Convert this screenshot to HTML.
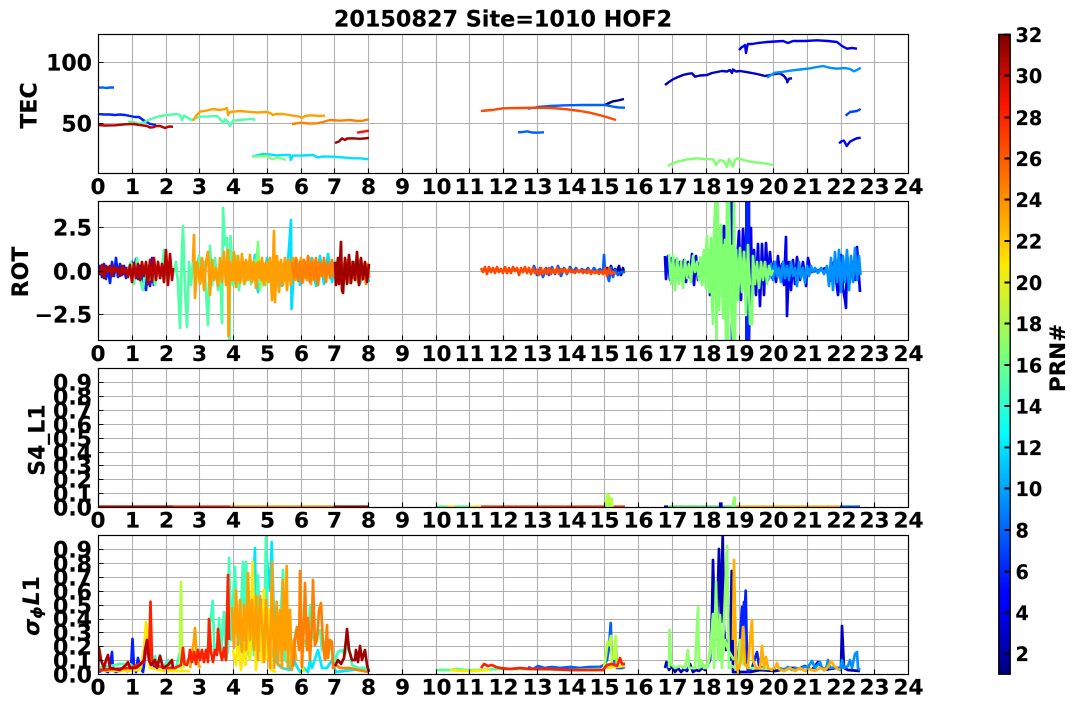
<!DOCTYPE html>
<html><head><meta charset="utf-8"><title>20150827 Site=1010 HOF2</title>
<style>
html,body{margin:0;padding:0;background:#fff}
svg{display:block}
text{font-family:"DejaVu Sans","Liberation Sans",sans-serif;font-weight:bold;font-size:22px;fill:#000;stroke:#000;stroke-width:.15px}
.x{text-anchor:middle;font-size:21.6px}
.y{text-anchor:end}
.c{font-size:19.2px}
.t{fill:none;stroke-width:2.4;stroke-linejoin:round}
.n .t{stroke-width:2.7}
</style></head><body>
<svg width="1077" height="709" viewBox="0 0 1077 709" xmlns="http://www.w3.org/2000/svg">
<defs>
<linearGradient id="jet" x1="0" y1="1" x2="0" y2="0">
<stop offset="0" stop-color="#00007f"/><stop offset=".11" stop-color="#0000ff"/><stop offset=".125" stop-color="#0000ff"/><stop offset=".34" stop-color="#00d4ff"/><stop offset=".375" stop-color="#00ffff"/><stop offset=".5" stop-color="#7dff7a"/><stop offset=".64" stop-color="#ffea00"/><stop offset=".66" stop-color="#ffd500"/><stop offset=".89" stop-color="#ff1300"/><stop offset="1" stop-color="#7f0000"/>
</linearGradient>
<clipPath id="c1"><rect x="98.5" y="34.5" width="810" height="139"/></clipPath>
<clipPath id="c2"><rect x="98.5" y="201.5" width="810" height="139"/></clipPath>
<clipPath id="c3"><rect x="98.5" y="368.5" width="810" height="139"/></clipPath>
<clipPath id="c4"><rect x="98.5" y="535.5" width="810" height="139"/></clipPath>
<path id="gx" fill="none" stroke="#b0b0b0" stroke-width="1.1" d="M132.5 0V139M166.5 0V139M199.5 0V139M233.5 0V139M267.5 0V139M301.5 0V139M334.5 0V139M368.5 0V139M402.5 0V139M436.5 0V139M469.5 0V139M503.5 0V139M537.5 0V139M571.5 0V139M604.5 0V139M638.5 0V139M672.5 0V139M706.5 0V139M739.5 0V139M773.5 0V139M807.5 0V139M841.5 0V139M874.5 0V139"/>
<path id="tx" fill="none" stroke="#000" stroke-width="1.1" d="M132.5 139v-5M166.5 139v-5M199.5 139v-5M233.5 139v-5M267.5 139v-5M301.5 139v-5M334.5 139v-5M368.5 139v-5M402.5 139v-5M436.5 139v-5M469.5 139v-5M503.5 139v-5M537.5 139v-5M571.5 139v-5M604.5 139v-5M638.5 139v-5M672.5 139v-5M706.5 139v-5M739.5 139v-5M773.5 139v-5M807.5 139v-5M841.5 139v-5M874.5 139v-5"/>
<path id="gy" fill="none" stroke="#b0b0b0" stroke-width="1.1" d="M98.5 14H908.5M98.5 28H908.5M98.5 42H908.5M98.5 56H908.5M98.5 70H908.5M98.5 84H908.5M98.5 97H908.5M98.5 111H908.5M98.5 125H908.5"/>
<path id="ty" fill="none" stroke="#000" stroke-width="1.1" d="M98.5 14h5M98.5 28h5M98.5 42h5M98.5 56h5M98.5 70h5M98.5 84h5M98.5 97h5M98.5 111h5M98.5 125h5"/>
</defs>
<rect width="1077" height="709" fill="#fff"/>

<!-- grids -->
<use href="#gx" y="34.5"/><use href="#gx" y="201.5"/><use href="#gx" y="368.5"/><use href="#gx" y="535.5"/>
<path fill="none" stroke="#b0b0b0" stroke-width="1.1" d="M98.5 62.5H908.5M98.5 123.5H908.5M98.5 227.5H908.5M98.5 271.5H908.5M98.5 314.5H908.5"/>
<use href="#gy" y="368.5"/><use href="#gy" y="535.5"/>

<!-- TEC -->
<g clip-path="url(#c1)" class="t">
<path class="t" stroke="#00008f" d="M605 105 609 103 613 101.3 618 100.5 624 99"/>
<path class="t" stroke="#0000c8" d="M665 85 669 82 673 79.3 678 77 683 75 688 73.8 692 73.3 695 76.7 700 75.5 707 75 712 73 717 72 722 71 727 71.5 730 70 732 73 733 69.5 736 71.5 740 71 745 71.8 750 72.7 757 74 765 76 770 75 775 74 780 73.3 784 76 787 80 787.3 82.3 789 78.7 792 78.3"/>
<path class="t" stroke="#0000ee" d="M739 50 742 47 744 46 745 45 746 53 747.5 45 748 44 752 44 758 43 767 42 775 41.5 783 41 788 43 793 41 805 41 817 40.3 828 41 837 42 842 46 847 48.7 852 48 857 48.7"/>
<path class="t" stroke="#0000ee" d="M839 143.3 842 141 844 140.7 846.7 146 850 141.7 854 139.5 857 138.3 860.7 137.7"/>
<path class="t" stroke="#0020ff" d="M98 114 104 114.5 110 114.5 115 115 120 114.5 125 115 130 116 135 117 139 117 143 120 147 122 150 124 156 125"/>
<path class="t" stroke="#0040ff" d="M845.7 115.7 850 112 857 111 860.7 109"/>
<path class="t" stroke="#0060ff" d="M98 87.7 103 87.5 106 88 110 87.5 114 87.5"/>
<path class="t" stroke="#0060ff" d="M528 108.7 538 107 550 106 565 105.3 583 105 595 105 605 105 610 106 613 106.7 619 107.5 625 107.7"/>
<path class="t" stroke="#0060ff" d="M518 132.3 523 132 527 131.3 532 132.5 537 132.7 544 132.3"/>
<path class="t" stroke="#0090ff" d="M767 77.7 771 75 775 72.7 782 72 790 70.7 800 69.5 810 68.3 817 67 823 66 830 67.8 837 68.7 845 68 850 69 854 71.3 857 70 860.7 67.7"/>
<path class="t" stroke="#00e0ff" d="M252 156.7 258 155 263 154 270 154.6 277 155.3 285 155 290 155 290.7 160 293 155.6 303 155.5 313 155 318 157.5 323 156.4 333 156.7 343 157.4 353 158.3 360 158.3 369 159.3"/>
<path class="t" stroke="#50ffa8" d="M128 121.7 134 122 140 124 144 122.5 148 120 154 118 160 116 168 115 177 114 180 115 182 120 184 115.5 188 118 192 120 196 118 200 116.7 208 116.5 217 116 220 119 223 123 225 119.3 228 122 230 126 233 120.7 240 120 247 119.3 253 118.7 255 120.7"/>
<path class="t" stroke="#80ff78" d="M252 156.7 260 156.3 267 156 270 158 273 159.3 277 157.3 281 158.3 286 160"/>
<path class="t" stroke="#80ff70" d="M668 166 672 163.5 677 161.7 687 159.5 697 158.3 705 159 713 159.3 716 165 720 160 724 161.5 727 166.7 729 159 733 166.7 735 160 737 158.3 744 160 750 161.7 757 162.5 765 163.3 773 165"/>
<path class="t" stroke="#ffa000" d="M193 120.7 196 116 200 111.7 207 110.5 213 109 220 110 225 109 227 108 228 115 230 112 233 111.7 240 111 247 111.7 257 112.5 267 112 270 113 273 115 276 114 283 114 292 115.5 300 116.7 302 118 305 116 310 115.3 318 115.8 325 115.7"/>
<path class="t" stroke="#ff8000" d="M292 124 296 123.5 300 122.7 308 123.5 317 123.3 323 122 330 120 340 120.7 350 120 357 121 363 120.7 369 119.3"/>
<path class="t" stroke="#ff4800" d="M481 111 492 110 503 108.3 520 108 537 107.7 552 108 567 109.3 580 111 590 112.7 603 116 616 120"/>
<path class="t" stroke="#ff1000" d="M357 132.7 363 131.7 369 130.7"/>
<path class="t" stroke="#b80000" d="M98 125 105 125.5 115 125.3 125 124.3 133 124 140 125 147 126 150 127.5 153 127.3 156 126 160 126 165 128 169 126.5 173 126.7"/>
<path class="t" stroke="#a00000" d="M335 143 339 141.5 342 138.3 345 140 347 138.5 353 138.3 360 138.8 369 138"/>
</g>

<!-- ROT -->
<g clip-path="url(#c2)" class="n">
<path class="t" stroke="#00009a" d="M605 272 607 268 609 274 611 266 613 273 615 269 617 272 619 266 621 275 623 268 624 273"/>
<path class="t" stroke="#0020ff" d="M98 275 100 266 102 277 104 264 106 279 108 267 110 283 112 262 114 276 116 258 118 277 120 264 122 275 124 266 126 278 128 268 130 274 132 262 134 281 136 259 138 279 140 266 142 283 144 269 146 290 148 266 150 286 152 258 154 286"/>
<path class="t" stroke="#0000ee" d="M665 256 666 279 668 256 670 280 672 258 674 275 676 260 678 278 680 262 682 276 684 260 686 282 688 262 690 278 692 254 694 285 696 256 698 280 700 262 702 277 704 262 706 280 708 266 710 295 712 250 714 282 716 252 718 290 720 250 722 290 724 226 726 290 727 240 728 294 730 258 731.5 201 732 340 733 246 735 290 737 262 739 231 741 300 743 229 745 280 747 201 747.5 340 749 201 749 340 751 228 752 302 754 250 756 295 758 244 760 306 762 244 764 295 766 243 768 280 770 252 772 278 774 262 776 282 778 256 780 278 782 264 784 285 786 237 787 316 789 262 791 290 793 260 795 284 797 257 800 280 803 262 806 286 808 258 811 272 820 270 826 268 830 281 834 262 838 295 841 255 843 288 845 300 846 308 847 252 849 286 852 262 855 280 857 247 860 292"/>
<path fill="none" stroke="#0020ff" stroke-width="5" d="M747.5 201V340"/>
<path class="t" stroke="#0060ff" d="M528 268 531 273 534 266 537 275 540 268 543 277 546 268 549 275 552 267 555 274 558 266 561 276 564 268 567 274 570 267 573 272 576 268 579 272 582 269 585 272 588 268 591 273 594 268 597 272 600 269 603 273 604 255 605 272 607 274 609 281 611 268 613 277 615 270 618 275 621 272 625 272"/>
<path class="t" stroke="#0090ff" d="M767 268 769 276 771 264 773 280 775 262 777 276 779 268 781 282 783 262 785 278 787 266 789 280 791 262 793 276 795 268 797 286 799 262 801 278 803 268 805 283 807 266 809 276 811 266 813 272 815 268 818 273 821 268 824 274 827 266 829 286 831 258 833 290 835 252 837 282 839 250 841 292 843 256 845 282 847 250 849 290 851 256 853 282 855 248 857 280 859 256 860.5 275"/>
<path class="t" stroke="#00e0ff" d="M252 271 255 255 258 292 261 262 264 285 267 258 270 280 273 262 276 285 279 264 282 286 285 262 288 262 291 220 291.5 309 294 270 297 260 300 285 304 262 308 280 312 258 316 286 320 256 324 284 328 254 332 282 336 262 340 280 345 265 350 283 355 262 360 284 365 264 369 282"/>
<path class="t" stroke="#50ffa8" d="M128 270 131 262 134 284 137 258 140 279 143 290 146 262 149 280 152 268 155 285 158 262 161 278 164 250 167 280 170 266 173 275 176 262 178 283 180 328 182 250 183 226 185 290 187 327 189 262 191 285 193 262 196 272 199 256 201 282 204 262 206 290 208 325 210 246 212 285 215 258 218 290 220 262 222 323 223 208 225 245 227 238 228 290 229.5 340 230.5 236 233 285 236 256 239 290 242 258 245 284 248 262 251 284 254 260 256 275"/>
<path class="t" stroke="#80ff78" d="M252 268 255 280 258 242 260 290 263 264 266 285 269 262 272 282 275 266 278 280 281 264 284 280 286 270"/>
<path class="t" stroke="#80ff70" d="M669 254 671 284 673 256 675 290 677 258 679 284 681 262 683 288 685 260 687 278 689 264 691 282 693 256 695 272 697 262 699 280 701 258 703 282 705 272 707 236 709 292 711 238 712 300 713 324 714 234 715.5 201 716.5 340 717.5 201 719 310 721 225 723 318 725 240 726 340 727 201 728 340 729 201 731 305 733 340 734 201 735 340 736 250 738 300 740 248 742 290 744 252 746 315 748 245 750 324 752 324 753 256 755 284 757 262 759 288 761 262 763 280 765 262 767 284 769 266 771 275 773 270"/>
<path class="t" stroke="#80ff70" d="M700 256 702 285 704 250 706 288 708 250 710 292 712 245 714 296 716 250 718 290 720 248 722 296 724 245 726 292 728 250 730 296 732 246 734 292 736 250 738 290 740 250 742 292 744 252 746 288 748 256 750 285"/>
<path class="t" stroke="#ffa000" d="M193 262 194 235 195 298 197 262 200 284 202 258 204 290 206 262 208 252 210 295 212 260 214 280 216 268 218 286 220 258 222 282 224 252 226 285 228 250 228.5 336 230 262 232 280 234 252 236 287 238 256 240 283 242 254 244 284 246 260 248 280 250 255 252 282 254 262 256 288 258 262 260 276 262 258 264 285 266 262 268 282 270 258 272 300 274 231 275 302 277 256 279 292 281 260 283 285 285 258 287 290 289 260 291 285 293 258 295 280 297 262 299 276 301 258 303 282 305 262 307 280 309 258 311 284 313 260 315 278 317 262 319 280 321 264 323 276 325 268"/>
<path class="t" stroke="#ffa000" d="M230 266 231.5 278 233 262 234.5 280 236 264 237.5 280 239 262 240.5 280 242 264 243.5 278 245 262 246.5 280 248 264 249.5 278 251 262 252.5 280 254 264 255.5 280 257 264 258.5 278 260 262 261.5 280 263 264 264.5 278 266 264 267.5 280 269 262 270.5 282 272 264 273.5 280 275 264 276.5 280 278 262 279.5 280 281 264 282.5 278 284 264 285.5 280 287 262 288.5 280 290 266 291.5 278"/>
<path class="t" stroke="#ff8000" d="M292 262 294 278 296 258 298 281 300 262 302 283 304 260 306 278 308 256 310 282 312 262 314 280 316 258 318 285 320 262 322 276 324 258 326 282 328 262 330 278 332 260 334 277 336 266 338 280 340 262 342 282 344 264 346 278 348 260 350 282 352 262 354 278 356 264 358 282 360 260 362 280 364 264 366 284 368 264 369 278"/>
<path class="t" stroke="#ff4800" d="M481 268 483 272 485 267 487 274 489 267 491 272 493 268 495 273 497 267 499 272 501 269 503 273 505 267 507 273 509 268 511 273 513 267 515 271 517 268 519 275 521 268 523 272 525 267 527 273 529 268 531 274 533 268 535 273 537 270 539 275 541 268 543 274 545 269 547 274 549 268 551 274 553 269 555 273 557 268 559 274 561 269 563 272 565 269 567 273 569 269 571 272 573 270 575 273 577 270 579 272 581 270 583 273 585 270 587 273 589 270 591 274 593 271 595 273 597 271 599 274 601 271 603 274 605 268 607 276 609 268 611 274 613 272 616 274"/>
<path class="t" stroke="#b80000" d="M98 268 100 274 102 265 104 278 106 266 108 272 110 266 112 276 114 266 116 272 118 268 120 276 122 266 124 274 126 268 128 277 130 265 132 282 134 263 136 278 138 264 140 280 142 262 144 276 146 262 148 284 150 260 152 282 154 258 156 280 158 262 160 278 162 264 164 282 166 250 168 285 170 254 172 280 173 268"/>
<path class="t" stroke="#a00000" d="M335 262 336 285 338 258 339 284 341 242 342 290 343 293 345 258 347 284 349 255 351 283 353 262 355 280 357 252 359 285 361 258 363 279 365 262 367 282 369 264"/>
</g>

<!-- S4 -->
<g clip-path="url(#c3)" fill="none" stroke-width="2.2">
<path stroke="#50ff90" d="M436 506.5H450M455 506.5H470"/>
<path stroke="#ffe800" d="M447 506.5H455M470 506.5H481"/>
<path stroke="#b80000" d="M98.5 506.5H173"/>
<path stroke="#ff2000" d="M173 506.5H230"/>
<path stroke="#ff9000" d="M230 506.5H335"/>
<path stroke="#a00000" d="M335 506.5H369"/>
<path stroke="#ff3800" d="M481 506.5H625"/>
<path stroke="#00009a" d="M664 506.5H668"/>
<path stroke="#58e878" d="M668 506.5H732"/>
<path stroke="#ffb000" d="M735 506.5H840"/>
<path stroke="#0060ff" d="M840 506.5H860"/>
<path stroke="#b4ff40" fill="#b4ff40" stroke-width="1.5" d="M605 507 607 494 609 495 610 498 612 498 613 507Z"/>
<path stroke="#0000d0" fill="#0000d0" stroke-width="1.2" d="M719.5 507V503H722V507Z"/>
<path stroke="#90ff70" fill="#90ff70" stroke-width="1.2" d="M732 507 733.5 497H735.5V507Z"/>
</g>

<!-- sigma -->
<g clip-path="url(#c4)" class="n">
<path class="t" stroke="#0000b8" d="M665 668 666.5 662 669 670 672 666 675 672 678 668 681 672 684 669 687 671 690 664 693 672 696 670 699 671 702 668 705 670 708 664 710 660 712 612 713 560 715 640 717 620 719 549 721 622 722.7 535 724 630 726 650 728 640 730 660 731.7 571 733 672 736 672 750 672 760 670 775 671 790 668 795 668 798 669 805 666 812 670 818 662 824 670 835 668 841 668 842 626 844 668 848 670 860 671"/>
<path class="t" stroke="#0020ff" d="M98 672 104 670 108 672 110 668 112 652 113 670 116 672 122 670 128 671 131 668 132.5 639 134 668 136 672 138 658 140 668 143 672 146 650 148 645 149 639 151 660 155 668 M737 668 740 640 742 607 743 650 744 602 745 607 745.7 590.7 747 660 748 672 752 668 755 658 757 652 759 665 762 668 765 670"/>
<path class="t" stroke="#0060ff" d="M528 667 533 669 538 666 545 668 552 667 560 668 570 667 580 668 590 667 600 667 604 665 607 660 609 648 610.7 623 612 660 614 665 616 645 617 668 622 668 625 667"/>
<path class="t" stroke="#0090ff" d="M780 668 784 670 788 667 792 670 796 668 800 669 804 667 808 667 812 661 815 668 820 662 822 668 826 669 828 660 830 668 835 667 838 669 840 670 842 660 844 668 848 666 850 660 852 668 855 654 857 652 858 668 860 670"/>
<path class="t" stroke="#00e8ff" d="M252 640 254 570 255 548 256 620 259 650 262 600 264 640 267 560 270 590 271.7 542 274 620 276 662 282 668 290 670 292 655 296 665 300 672 304 668 308 672 310 660 312 668 318 650 322 668 327 668 332 660 336 672 369 668"/>
<path class="t" stroke="#40ffb8" d="M98 668 110 666 120 664 130 664 135 668 143 662 146 640 149 655 152 662 155 656 158 668 160 655 163 668 168 660 172 668 176 668 180 652 184 664 188 660 192 655 196 660 199 650 204 660 207 652 212.7 600.7 214.5 655 218 640 219 618 221 650 224 612 226 660 228 650 229 558 231 640 233 600 235 567 237 630 239 655 243 562 245 640 246 562 248 650 250 660 252 620 254 655 258 575 260 650 264 640 266 537 268 640 270 660 276 640 280 630 283 570 285 660 290 665 296 630 300 650 304 640 308 650 310 605 314 640 320 630 322 650 326 640 330 645 335 660 338 652 342 650 345 655 348 640 352 665 358 668 369 668"/>
<path class="t" stroke="#58ff90" d="M436 670 445 670 450 670 457 669 465 670 475 670 500 669 530 669 570 670 600 669"/>
<path class="t" stroke="#90ff70" d="M669 668 669.5 630 671 664 675 668 680 666 685 668 688 650 689 668 695 668 698 607 699 668 701 660 704 668 708 666 711 640 713 614 714 668 716 582 718 660 720 640 722 668 724 620 727 546 729 668 732 666 735 668 738 670 740 640 743 664 750 668 773 669"/>
<path class="t" stroke="#90ff70" d="M700 668 703 664 706 668 709 660 712 640 714 650 716 620 718 640 720 615 722 660 725 640 728 650 731 655 734 660"/>
<path class="t" stroke="#b4ff40" d="M181 672 180 640 181 582 182 660 184 668 M262 660 264 590 265 650 M604 668 606 655 607.5 642 609 645 611 636 612 668 M614 660 615.5 636 617 668"/>
<path class="t" stroke="#ffe800" d="M98 670 120 671 140 670 144 650 146 622 148 640 150 668 165 671 190 671 M233 650 236 665 238 640 241 670 244 645 245.5 665 248 620 250 660 252.7 562 254 620 256 670 260 620 262 662 264 590 266 660 269 610 271 670 276 672 M300 660 304 672 M450 670 462 671 470 671 490 670 M604 668 625 666"/>
<path class="t" stroke="#ffb000" d="M733 640 734 560 736 662 738 672 741 660 743 627 745 664 748 668 750 640 752 620 753 660 756 668 760 668 762 646 764 668 766 657 768 668 772 670 775 668 777 663 779 669 784 671 790 668 795 671 800 668 805 671 810 669 815 671 820 668 825 670 828 667 831 661 835 667 840 670"/>
<path class="t" stroke="#ffa000" d="M190 668 194 640 195 628 197 660 200 668 M232 607 234 648 236 590 238 645 240 600 242 652 244 605 246 650 248 573 250 640 252 600 254 650 256 596 258 660 260 596 262 625 264 662 266 600 268 640 270 668 272 562 274 668 276.7 602 278 665 280 610 282 668 283 580 285 650 286.7 566 288 668 290 610 292 670 294 640 296 660"/>
<path class="t" stroke="#ff8000" d="M293 667 295 640 297 627 299 650 300 571 302 667 304 620 305 583 307 650 308 618 310 660 312 620 313 580 315 645 317 640 319 610 321 603 323 645 325 660 327 625 328 658 330 640 332 642 333 668 336 665 340 668 350 668 358 670 369 672"/>
<path class="t" stroke="#ff2000" d="M98 670 130 668 144 662 147 640 149 660 150.5 601.7 152 660 155 665 165 668 175 668 181 665 183 648 184.5 664 187 665 189 658 190 650 192 662 194 652 196 664 198 650 200 660 202 650 204 662 206 650 208 662 209 619 211 652 213 662 215 650 217 655 218 629 220 650 222 660 224 648 226 660 228 575 229 640 M481 668 484 664 488 666 492 665 496 667 500 668 510 669 520 668 530 669 550 669 570 670 590 670 603 670 607 665 612 664 617 666 620 658 622 664 625 664"/>
<path class="t" stroke="#b80000" d="M98 670 99 648 101 660 104 668 106 660 108 655 110 668 120 670 126 665 128 662 130 668 135 668 140 665 144 660 145 650 147 640 149 660 151 665 155 660 157 668 160 656 163 668 168 665 172 660 173 668"/>
<path class="t" stroke="#a00000" d="M335 666 338 660 341 664 344 658 346 640 347 629 349 650 352 660 355 660 356 650 358 662 360 646 362 660 365 650 367 665 369 672"/>
</g>

<!-- ticks + spines -->
<use href="#tx" y="34.5"/><use href="#tx" y="201.5"/><use href="#tx" y="368.5"/><use href="#tx" y="535.5"/>
<use href="#ty" y="368.5"/><use href="#ty" y="535.5"/>
<path fill="none" stroke="#000" stroke-width="1.1" d="M98.5 62.5h5M98.5 123.5h5M98.5 227.5h5M98.5 271.5h5M98.5 314.5h5"/>
<g fill="none" stroke="#000" stroke-width="1.2">
<rect x="98.5" y="34.5" width="810" height="139"/>
<rect x="98.5" y="201.5" width="810" height="139"/>
<rect x="98.5" y="368.5" width="810" height="139"/>
<rect x="98.5" y="535.5" width="810" height="139"/>
</g>

<!-- title & axis labels -->
<text x="503" y="26.5" text-anchor="middle" style="font-size:22.3px">20150827 Site=1010 HOF2</text>
<text transform="translate(36.5,105.5) rotate(-90)" text-anchor="middle">TEC</text>
<text transform="translate(28,272) rotate(-90)" text-anchor="middle">ROT</text>
<text transform="translate(44.5,440) rotate(-90)" text-anchor="middle">S4_L1</text>
<text transform="translate(39,606) rotate(-90)" text-anchor="middle"><tspan font-style="italic">σ</tspan><tspan font-style="italic" dy="3" style="font-size:15.5px">ϕ</tspan><tspan font-style="italic" dy="-3" dx="1">L</tspan><tspan>1</tspan></text>
<text transform="translate(1065,358) rotate(-90)" text-anchor="middle" style="font-size:21.5px">PRN#</text>

<!-- y tick labels -->
<text class="y" x="92" y="70.5">100</text><text class="y" x="92" y="131.5">50</text>
<text class="y" x="92" y="235.5">2.5</text><text class="y" x="92" y="279.5">0.0</text><text class="y" x="92" y="322.5">−2.5</text>
<text class="y" x="92" y="390.5">0.9</text><text class="y" x="92" y="404.5">0.8</text><text class="y" x="92" y="418.5">0.7</text><text class="y" x="92" y="432.5">0.6</text><text class="y" x="92" y="446.5">0.5</text><text class="y" x="92" y="460.5">0.4</text><text class="y" x="92" y="473.5">0.3</text><text class="y" x="92" y="487.5">0.2</text><text class="y" x="92" y="501.5">0.1</text><text class="y" x="92" y="515.5">0.0</text>
<text class="y" x="92" y="557.5">0.9</text><text class="y" x="92" y="571.5">0.8</text><text class="y" x="92" y="585.5">0.7</text><text class="y" x="92" y="599.5">0.6</text><text class="y" x="92" y="613.5">0.5</text><text class="y" x="92" y="626.5">0.4</text><text class="y" x="92" y="640.5">0.3</text><text class="y" x="92" y="654.5">0.2</text><text class="y" x="92" y="668.5">0.1</text><text class="y" x="92" y="682.5">0.0</text>

<!-- x tick labels -->
<g>
<text class="x" x="98" y="194">0</text><text class="x" x="132.5" y="194">1</text><text class="x" x="166.5" y="194">2</text><text class="x" x="199.5" y="194">3</text><text class="x" x="233.5" y="194">4</text><text class="x" x="267.5" y="194">5</text><text class="x" x="301.5" y="194">6</text><text class="x" x="334.5" y="194">7</text><text class="x" x="368.5" y="194">8</text><text class="x" x="402.5" y="194">9</text><text class="x" x="436.5" y="194">10</text><text class="x" x="469.5" y="194">11</text><text class="x" x="503.5" y="194">12</text><text class="x" x="537.5" y="194">13</text><text class="x" x="571.5" y="194">14</text><text class="x" x="604.5" y="194">15</text><text class="x" x="638.5" y="194">16</text><text class="x" x="672.5" y="194">17</text><text class="x" x="706.5" y="194">18</text><text class="x" x="739.5" y="194">19</text><text class="x" x="773.5" y="194">20</text><text class="x" x="807.5" y="194">21</text><text class="x" x="841.5" y="194">22</text><text class="x" x="874.5" y="194">23</text><text class="x" x="908.5" y="194">24</text>
</g>
<g>
<text class="x" x="98" y="361">0</text><text class="x" x="132.5" y="361">1</text><text class="x" x="166.5" y="361">2</text><text class="x" x="199.5" y="361">3</text><text class="x" x="233.5" y="361">4</text><text class="x" x="267.5" y="361">5</text><text class="x" x="301.5" y="361">6</text><text class="x" x="334.5" y="361">7</text><text class="x" x="368.5" y="361">8</text><text class="x" x="402.5" y="361">9</text><text class="x" x="436.5" y="361">10</text><text class="x" x="469.5" y="361">11</text><text class="x" x="503.5" y="361">12</text><text class="x" x="537.5" y="361">13</text><text class="x" x="571.5" y="361">14</text><text class="x" x="604.5" y="361">15</text><text class="x" x="638.5" y="361">16</text><text class="x" x="672.5" y="361">17</text><text class="x" x="706.5" y="361">18</text><text class="x" x="739.5" y="361">19</text><text class="x" x="773.5" y="361">20</text><text class="x" x="807.5" y="361">21</text><text class="x" x="841.5" y="361">22</text><text class="x" x="874.5" y="361">23</text><text class="x" x="908.5" y="361">24</text>
</g>
<g>
<text class="x" x="98" y="527.5">0</text><text class="x" x="132.5" y="527.5">1</text><text class="x" x="166.5" y="527.5">2</text><text class="x" x="199.5" y="527.5">3</text><text class="x" x="233.5" y="527.5">4</text><text class="x" x="267.5" y="527.5">5</text><text class="x" x="301.5" y="527.5">6</text><text class="x" x="334.5" y="527.5">7</text><text class="x" x="368.5" y="527.5">8</text><text class="x" x="402.5" y="527.5">9</text><text class="x" x="436.5" y="527.5">10</text><text class="x" x="469.5" y="527.5">11</text><text class="x" x="503.5" y="527.5">12</text><text class="x" x="537.5" y="527.5">13</text><text class="x" x="571.5" y="527.5">14</text><text class="x" x="604.5" y="527.5">15</text><text class="x" x="638.5" y="527.5">16</text><text class="x" x="672.5" y="527.5">17</text><text class="x" x="706.5" y="527.5">18</text><text class="x" x="739.5" y="527.5">19</text><text class="x" x="773.5" y="527.5">20</text><text class="x" x="807.5" y="527.5">21</text><text class="x" x="841.5" y="527.5">22</text><text class="x" x="874.5" y="527.5">23</text><text class="x" x="908.5" y="527.5">24</text>
</g>
<g>
<text class="x" x="98" y="694.5">0</text><text class="x" x="132.5" y="694.5">1</text><text class="x" x="166.5" y="694.5">2</text><text class="x" x="199.5" y="694.5">3</text><text class="x" x="233.5" y="694.5">4</text><text class="x" x="267.5" y="694.5">5</text><text class="x" x="301.5" y="694.5">6</text><text class="x" x="334.5" y="694.5">7</text><text class="x" x="368.5" y="694.5">8</text><text class="x" x="402.5" y="694.5">9</text><text class="x" x="436.5" y="694.5">10</text><text class="x" x="469.5" y="694.5">11</text><text class="x" x="503.5" y="694.5">12</text><text class="x" x="537.5" y="694.5">13</text><text class="x" x="571.5" y="694.5">14</text><text class="x" x="604.5" y="694.5">15</text><text class="x" x="638.5" y="694.5">16</text><text class="x" x="672.5" y="694.5">17</text><text class="x" x="706.5" y="694.5">18</text><text class="x" x="739.5" y="694.5">19</text><text class="x" x="773.5" y="694.5">20</text><text class="x" x="807.5" y="694.5">21</text><text class="x" x="841.5" y="694.5">22</text><text class="x" x="874.5" y="694.5">23</text><text class="x" x="908.5" y="694.5">24</text>
</g>

<!-- colorbar -->
<rect x="998.8" y="34.4" width="11.4" height="639.8" fill="url(#jet)" stroke="#000" stroke-width="1.4"/>
<path fill="none" stroke="#000" stroke-width="2" d="M1004.5 34.5h6M1004.5 75.5h6M1004.5 117.5h6M1004.5 158.5h6M1004.5 199.5h6M1004.5 241h6M1004.5 282.5h6M1004.5 323.5h6M1004.5 365h6M1004.5 406h6M1004.5 447.5h6M1004.5 488.5h6M1004.5 530h6M1004.5 571.5h6M1004.5 612.5h6M1004.5 653.5h6"/>
<text class="c" x="1015.5" y="42">32</text><text class="c" x="1015.5" y="83">30</text><text class="c" x="1015.5" y="125">28</text><text class="c" x="1015.5" y="166">26</text><text class="c" x="1015.5" y="207">24</text><text class="c" x="1015.5" y="248.5">22</text><text class="c" x="1015.5" y="290">20</text><text class="c" x="1015.5" y="331">18</text><text class="c" x="1015.5" y="372.5">16</text><text class="c" x="1015.5" y="413.5">14</text><text class="c" x="1015.5" y="455">12</text><text class="c" x="1015.5" y="496">10</text><text class="c" x="1015.5" y="537.5">8</text><text class="c" x="1015.5" y="579">6</text><text class="c" x="1015.5" y="620">4</text><text class="c" x="1015.5" y="661">2</text>
</svg>
</body></html>
